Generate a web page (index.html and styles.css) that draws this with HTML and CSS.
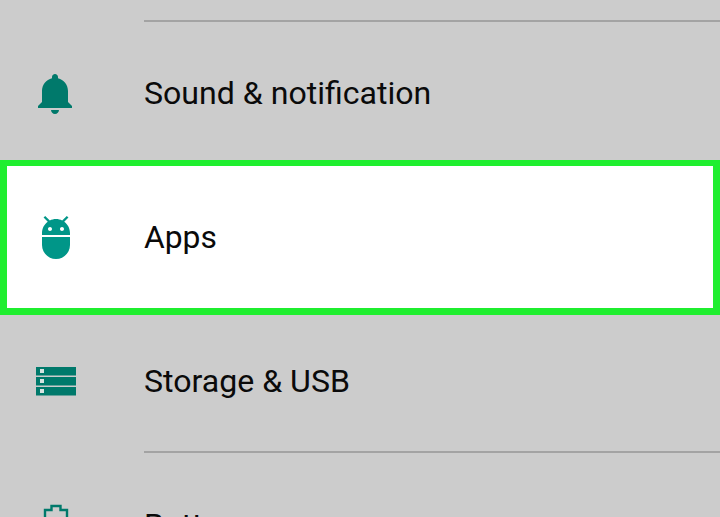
FILE: index.html
```html
<!DOCTYPE html>
<html lang="en">
<head>
    <title>Settings</title>
    <meta charset="utf-8">
    <meta name="viewport" content="width=device-width, initial-scale=1">
    <link rel="stylesheet" href="styles.css">
</head>
<body>
    <main class="settings">
        <div class="divider"></div>
        <a class="row">
            <svg class="icon" viewBox="0 0 24 24">
                <path d="M11.5 22c1.1 0 2-.9 2-2h-4c0 1.1.9 2 2 2zm6.5-6v-5.5c0-3.07-2.13-5.64-5-6.32V3.5c0-.83-.67-1.5-1.5-1.5S10 2.67 10 3.5v.68c-2.87.68-5 3.25-5 6.32V16l-2 2v1h17v-1l-2-2z"/>
            </svg>
            <span class="label">Sound &amp; notification</span>
        </a>
        <a class="row active">
            <svg class="icon" viewBox="0 0 24 24">
                <path d="M5 16c0 3.87 3.13 7 7 7s7-3.13 7-7v-4H5v4zM16.12 4.37l2.1-2.1-.82-.83-2.3 2.31C14.16 3.28 13.12 3 12 3s-2.16.28-3.09.75L6.6 1.44l-.82.83 2.1 2.1C6.14 5.64 5 7.68 5 10v1h14v-1c0-2.32-1.14-4.36-2.88-5.63zM9 9c-.55 0-1-.45-1-1s.45-1 1-1 1 .45 1 1-.45 1-1 1zm6 0c-.55 0-1-.45-1-1s.45-1 1-1 1 .45 1 1-.45 1-1 1z"/>
            </svg>
            <span class="label">Apps</span>
        </a>
        <a class="row storage">
            <svg class="icon" viewBox="0 0 48 48">
                <path d="M4 10h40v8.500H4zM4 20h40v8.500H4zM4 30h40v8.500H4z"/>
                <path class="slot" d="M8 12h4v4H8zM8 22h4v4H8zM8 32h4v4H8z"/>
            </svg>
            <span class="label">Storage &amp; USB</span>
        </a>
        <div class="divider"></div>
        <a class="row battery">
            <svg class="icon" viewBox="0 0 48 48">
                <path class="outline" d="M13 43V8h6.500V4h9v4H35v35z"/>
            </svg>
            <span class="label">Battery</span>
        </a>
    </main>
</body>
</html>
```
FILE: styles.css
```css
* {
    box-sizing: border-box;
    margin: 0;
    padding: 0;
}

body {
    background: #ccc;
    color: #0a0a0a;
    font-family: Roboto, sans-serif;
    height: 517px;
    overflow: hidden;
}

.settings {
    padding-top: 20px;
    height: 517px;
    overflow: hidden;
}

.divider {
    height: 2px;
    margin-left: 144px;
    background: #a3a3a3;
}

.row {
    display: flex;
    align-items: center;
    gap: 64px;
    height: 144px;
    padding-left: 32px;
}

.icon {
    width: 48px;
    height: 48px;
    fill: #00796b;
}

.label {
    margin-top: -2px;
    font-size: 32.1px;
    line-height: 40px;
}

/* highlighted row sits over the edges of its neighbours */
.active {
    position: relative;
    height: 155px;
    margin: -6px 0;
    padding-left: 25px;
    background: #fff;
    border: 7px solid #1fee2f;
    border-top-width: 6px;
}

.active .icon {
    fill: #009688;
}

.active .label {
    margin-top: 0;
    font-size: 31.8px;
}

.storage {
    height: 142px;
    padding-top: 2px;
}

.storage .label {
    margin-top: 0;
}

.battery {
    padding-top: 2px;
}

.icon .slot {
    fill: #d5e3e0;
}

.icon .outline {
    fill: none;
    stroke: #00796b;
    stroke-width: 2.4;
}
```
